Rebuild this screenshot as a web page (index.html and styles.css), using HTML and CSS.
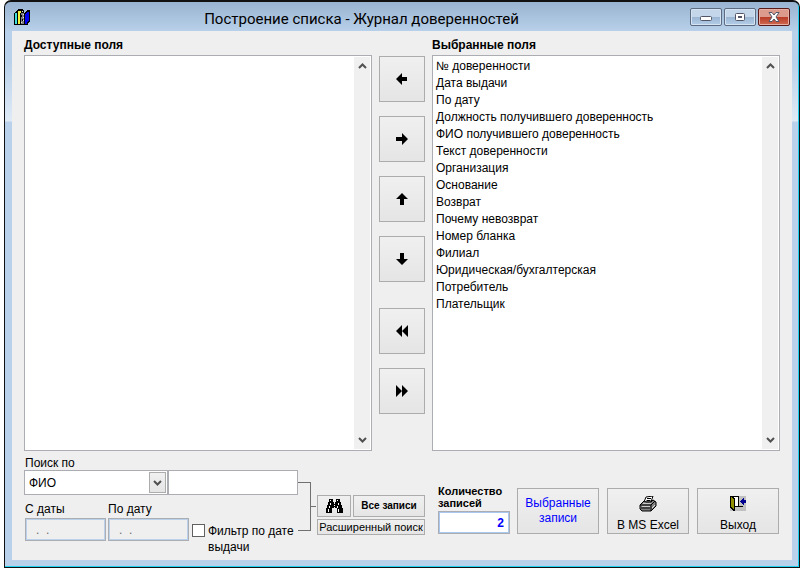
FILE: index.html
```html
<!DOCTYPE html>
<html lang="ru">
<head>
    <meta charset="UTF-8">
    <meta name="viewport" content="width=device-width, initial-scale=1.0">
    <title>Построение списка - Журнал доверенностей</title>
    <link rel="stylesheet" href="styles.css">
</head>
<body>
    <div class="window">
        <!-- Заголовок окна -->
        <header class="titlebar">
            <svg class="app-icon" width="17" height="17" viewBox="0 0 17 17" shape-rendering="crispEdges">
                <path d="M0 5h1V4h1V3h1V2h1V1h1h4v1h1v3h1V4h1V3h1V2h3v12h-1v1h-1v2H0z" fill="#000"/>
                <path d="M1 5h2v11H1z" fill="#40e0e0"/>
                <path d="M4 3h3v2H6v11H4z" fill="#f0f040"/>
                <path d="M7 5h3v11H7z" fill="#808080"/>
                <path d="M8 3h1v1H8zM9 6h1v1H9zM9 9h1v1H9zM9 12h1v1H9zM7 14h1v1H7z" fill="#e0e0e0"/>
                <path d="M7 7h1v2H7zM8 11h1v2H8z" fill="#000"/>
                <path d="M11 6h1V5h1V4h2v9h-1v1h-1v2h-2z" fill="#0000f0"/>
            </svg>
            <h1 class="title">Построение списка - Журнал доверенностей</h1>
            <div class="window-buttons">
                <button class="window-button" aria-label="Свернуть">
                    <svg width="12" height="10" viewBox="0 0 12 10"><rect x=".5" y="4.500" width="11" height="4" rx="1" fill="#fff" stroke="#535666"/></svg>
                </button>
                <button class="window-button" aria-label="Развернуть">
                    <svg width="12" height="10" viewBox="0 0 12 10"><rect x="1.500" y="1.500" width="9" height="7" rx="1" fill="#fff" stroke="#535666"/><rect x="4.500" y="4.500" width="3" height="1" fill="#8cb0d8" stroke="#535666"/></svg>
                </button>
                <button class="window-button window-close" aria-label="Закрыть">
                    <svg width="12" height="10" viewBox="0 0 12 10"><path d="M1 .5h3L6 3l2-2.500h3L8 5l3 4.500H8L6 7 4 9.500H1L4 5z" fill="#fff" stroke="#535666"/></svg>
                </button>
            </div>
        </header>

        <main class="content">
            <!-- Списки полей -->
            <section class="fields">
                <div class="field-list">
                    <label class="list-label" for="available">Доступные поля</label>
                    <div class="listbox">
                        <select class="list" id="available" size="20"></select>
                        <div class="scrollbar">
                            <svg width="9" height="6" viewBox="0 0 9 6"><path d="M1 5l3.500-3.500L8 5" fill="none" stroke="#505050" stroke-width="2"/></svg>
                            <svg width="9" height="6" viewBox="0 0 9 6"><path d="M1 1l3.500 3.500L8 1" fill="none" stroke="#505050" stroke-width="2"/></svg>
                        </div>
                    </div>
                </div>

                <div class="move-buttons">
                    <button class="button move" aria-label="Убрать поле">
                        <svg width="12" height="12" viewBox="0 0 12 12"><path d="M0 6l6-6v4h5v4H6v4z"/></svg>
                    </button>
                    <button class="button move" aria-label="Добавить поле">
                        <svg width="12" height="12" viewBox="0 0 12 12"><path d="M12 6L6 0v4H0v4h6v4z"/></svg>
                    </button>
                    <button class="button move" aria-label="Вверх">
                        <svg width="12" height="12" viewBox="0 0 12 12"><path d="M6 0l6 6H8v6H4V6H0z"/></svg>
                    </button>
                    <button class="button move" aria-label="Вниз">
                        <svg width="12" height="12" viewBox="0 0 12 12"><path d="M6 12l6-6H8V0H4v6H0z"/></svg>
                    </button>
                    <button class="button move move-all" aria-label="Убрать все">
                        <svg width="12" height="12" viewBox="0 0 12 12"><path d="M0 6l6-6v12zM6 6l6-6v12z"/></svg>
                    </button>
                    <button class="button move" aria-label="Добавить все">
                        <svg width="12" height="12" viewBox="0 0 12 12"><path d="M6 6L0 0v12zM12 6L6 0v12z"/></svg>
                    </button>
                </div>

                <div class="field-list">
                    <label class="list-label" for="selected">Выбранные поля</label>
                    <div class="listbox">
                        <select class="list" id="selected" size="20">
                            <option>№ доверенности</option>
                            <option>Дата выдачи</option>
                            <option>По дату</option>
                            <option>Должность получившего доверенность</option>
                            <option>ФИО получившего доверенность</option>
                            <option>Текст доверенности</option>
                            <option>Организация</option>
                            <option>Основание</option>
                            <option>Возврат</option>
                            <option>Почему невозврат</option>
                            <option>Номер бланка</option>
                            <option>Филиал</option>
                            <option>Юридическая/бухгалтерская</option>
                            <option>Потребитель</option>
                            <option>Плательщик</option>
                        </select>
                        <div class="scrollbar">
                            <svg width="9" height="6" viewBox="0 0 9 6"><path d="M1 5l3.500-3.500L8 5" fill="none" stroke="#505050" stroke-width="2"/></svg>
                            <svg width="9" height="6" viewBox="0 0 9 6"><path d="M1 1l3.500 3.500L8 1" fill="none" stroke="#505050" stroke-width="2"/></svg>
                        </div>
                    </div>
                </div>
            </section>

            <!-- Поиск и действия -->
            <section class="bottom">
                <div class="search">
                    <label class="search-label" for="search-by">Поиск по</label>
                    <div class="search-row">
                        <div class="combo">
                            <select class="combo-select" id="search-by">
                                <option>ФИО</option>
                            </select>
                            <span class="combo-arrow">
                                <svg width="9" height="6" viewBox="0 0 9 6"><path d="M1 1l3.500 3.500L8 1" fill="none" stroke="#505050" stroke-width="2"/></svg>
                            </span>
                        </div>
                        <input class="search-input" type="text" aria-label="Строка поиска">
                    </div>
                    <div class="date-row">
                        <div class="date">
                            <label for="date-from">С даты</label>
                            <input class="date-input" id="date-from" type="text" value=".  ." disabled>
                        </div>
                        <div class="date">
                            <label for="date-to">По дату</label>
                            <input class="date-input" id="date-to" type="text" value=".  ." disabled>
                        </div>
                        <div class="filter">
                            <input class="checkbox" id="date-filter" type="checkbox">
                            <label for="date-filter">Фильтр по дате<br>выдачи</label>
                        </div>
                    </div>
                </div>

                <div class="bracket"></div>

                <div class="search-buttons">
                    <button class="button find" aria-label="Найти">
                        <svg width="17" height="15" viewBox="0 0 17 15" shape-rendering="crispEdges">
                            <path d="M3 0h4v3h1v2h1V3h1V0h4v3h1v3h1v3h1v5h-6V9H9V8H8v1H6v5H0V9h1V6h1V3h1z"/>
                            <path d="M4 1h1v1H4zM11 1h1v1h-1zM4 4h1v2H4zM12 4h1v2h-1zM3 7h1v2H3zM8 6h1v1H8zM11 7h1v2h-1zM2 10h1v3H2zM12 10h1v3h-1z" fill="#fff"/>
                        </svg>
                    </button>
                    <button class="button all-records">Все записи</button>
                    <button class="button advanced">Расширенный поиск</button>
                </div>

                <div class="count">
                    <label class="count-label" for="count">Количество записей</label>
                    <input class="count-input" id="count" type="text" value="2">
                </div>

                <div class="actions">
                    <button class="button action action-selected">Выбранные записи</button>
                    <button class="button action">
                        <svg width="18" height="16" viewBox="0 0 18 16">
                            <path d="M5 6L7 1l7-1-2 6z" fill="#fff" stroke="#000"/>
                            <path d="M8 2.500h4M7.500 4.500h4" stroke="#000"/>
                            <path d="M1 9l4-4 2 1h5l2-2 3 2v4l-5 5H3l-2-2z" fill="#808080" stroke="#000"/>
                            <path d="M1 9h11l4-4M12 9v6M2 12h9" fill="none" stroke="#000"/>
                            <path d="M3 10.500h8M4 7.500h8" stroke="#ccc"/>
                            <path d="M13 12l3-3" stroke="#ddd"/>
                        </svg>
                        В MS Excel
                    </button>
                    <button class="button action">
                        <svg width="16" height="16" viewBox="0 0 16 16" shape-rendering="crispEdges">
                            <path d="M0 0h16v15H0z" fill="#c0c0c0"/>
                            <path d="M1 0h8v10h4v1H1z" fill="#000"/>
                            <path d="M3 1h5v9H3z" fill="#fff"/>
                            <path d="M0 0h2l3 3v12H3l-3-3z" fill="#000"/>
                            <path d="M1 1l3 3v10l-3-3z" fill="#909000"/>
                            <path d="M10 5h1V4h1V3h1V2h1v2h2v3h-2v2h-1V8h-1V7h-1V6h-1z" fill="#000090"/>
                        </svg>
                        Выход
                    </button>
                </div>
            </section>
        </main>
    </div>
</body>
</html>
```

FILE: styles.css
```css
* {
    box-sizing: border-box;
}
body {
    margin: 0;
    padding: 0 3px 2px 4px;
    min-height: 100vh;
    display: flex;
    background-color: #fff;
    font-family: "Liberation Sans", Arial, sans-serif;
    font-size: 12px;
    line-height: 16px;
    color: #000;
}
button, input, select {
    font: inherit;
    color: inherit;
    margin: 0;
    border-radius: 0;
}
.window {
    flex: 1;
    display: flex;
    flex-direction: column;
    padding: 0 7px 7px;
    border: 1px solid #111;
    border-top-width: 2px;
    border-radius: 7px 7px 0 0;
    background: linear-gradient(#99b4d1, #b9d1ea 30px, #b9d1ea 60px, #dfeaf6 119px, #b9d1ea 120px);
    box-shadow: inset -1px -1px #1fd0f0;
}

/* Заголовок */
.titlebar {
    display: flex;
    align-items: center;
    height: 29px;
    padding: 0 2px;
}
.app-icon {
    flex: none;
}
.title {
    flex: 1;
    margin: 0;
    padding: 4px 0 0 2px;
    font-family: Roboto, "Noto Sans", sans-serif;
    font-size: 15px;
    font-weight: normal;
    line-height: 24px;
    text-align: center;
}
.window-buttons {
    display: flex;
    gap: 2px;
}
.window-button {
    display: flex;
    align-items: center;
    justify-content: center;
    width: 32px;
    height: 18px;
    padding: 0;
    border: 1px solid #5d6c82;
    border-radius: 2px;
    background: linear-gradient(#c4d6ea 50%, #9ab5d3 50%, #b4cee8);
    box-shadow: inset 0 0 0 1px #d5e4f3;
}
.window-close {
    border-color: #5a1a1a;
    background: linear-gradient(#dc9a8c 50%, #b83a26 50%, #cf6a50);
    box-shadow: inset 0 0 0 1px #e6b0a4;
}

.content {
    flex: 1;
    display: flex;
    flex-direction: column;
    padding: 6px 12px 5px;
    background-color: #efefef;
}
.button {
    padding: 0;
    border: 1px solid #acacac;
    background: linear-gradient(#f0f0f0, #e5e5e5);
}

/* Списки */
.fields {
    flex: 1;
    display: grid;
    grid-template-columns: 1fr 46px 1fr;
    gap: 7px;
}
.field-list {
    display: flex;
    flex-direction: column;
}
.list-label {
    height: 18px;
    font-weight: bold;
}
.listbox {
    flex: 1;
    display: flex;
    padding: 1px;
    border: 1px solid #abadb3;
    background-color: #fff;
}
.list {
    flex: 1;
    height: 100%;
    padding: 2px 0 0;
    border: none;
    outline: none;
    overflow: hidden;
    background-color: #fff;
}
.list option {
    min-height: 17px;
    padding: 0 2px;
    line-height: 17px;
}
.scrollbar {
    display: flex;
    flex-direction: column;
    align-items: center;
    justify-content: space-between;
    width: 16px;
    padding: 6px 0;
    background-color: #f0f0f0;
}
.move-buttons {
    display: flex;
    flex-direction: column;
    gap: 14px;
    padding-top: 19px;
}
.move {
    height: 46px;
}
.move svg {
    display: block;
    margin: 0 auto;
}
.move-all {
    margin-top: 12px;
}

/* Нижняя панель */
.bottom {
    display: flex;
    align-items: flex-start;
}
.search {
    padding-top: 4px;
}
.search-label {
    display: block;
    height: 15px;
    padding-left: 1px;
}
.search-row {
    display: flex;
}
.combo {
    position: relative;
    width: 144px;
    height: 25px;
}
.combo-select {
    appearance: none;
    width: 100%;
    height: 100%;
    padding: 0 20px 0 4px;
    border: 1px solid #abadb3;
    background-color: #fff;
}
.combo-arrow {
    position: absolute;
    top: 2px;
    right: 2px;
    bottom: 2px;
    width: 17px;
    display: flex;
    align-items: center;
    justify-content: center;
    border: 1px solid #acacac;
    background: linear-gradient(#f0f0f0, #e5e5e5);
    pointer-events: none;
}
.search-input {
    width: 130px;
    height: 25px;
    padding: 0 4px;
    border: 1px solid #abadb3;
}
.date-row {
    display: flex;
    gap: 2px;
    padding: 6px 0 0 1px;
}
.date {
    display: flex;
    flex-direction: column;
    width: 81px;
}
.date-input {
    width: 100%;
    height: 23px;
    margin-top: 1px;
    padding: 0 10px;
    border: 1px solid #abadb3;
    background-color: #efefef;
    box-shadow: inset 0 0 0 1px #b9d1ea;
    color: #6d6d6d;
    white-space: pre;
}
.filter {
    display: flex;
    gap: 3px;
    padding: 22px 0 0 1px;
}
.checkbox {
    appearance: none;
    width: 13px;
    height: 13px;
    margin-top: 1px;
    border: 1px solid #606060;
    background-color: #fff;
}
.checkbox:checked {
    box-shadow: inset 0 0 0 2px #fff;
    background-color: #333;
}
/* Скобка от полей поиска к кнопкам */
.bracket {
    position: relative;
    width: 13px;
    height: 49px;
    margin: 31px 6px 0 0;
    border: 1px solid #707070;
    border-left: none;
}
.bracket::after {
    content: "";
    position: absolute;
    top: 23px;
    left: 13px;
    width: 5px;
    height: 1px;
    background-color: #707070;
}
.search-buttons {
    display: grid;
    grid-template-columns: 34px 72px;
    gap: 2px;
    padding-top: 44px;
}
.find, .all-records {
    height: 22px;
}
.find svg {
    display: block;
    margin: 0 auto;
}
.all-records {
    font-size: 10px;
    font-weight: bold;
}
.advanced {
    grid-column: span 2;
    height: 16px;
    font-size: 11px;
    line-height: 14px;
    white-space: nowrap;
}
.count {
    width: 72px;
    margin-left: auto;
    padding-top: 34px;
}
.count-label {
    display: block;
    font-size: 11px;
    font-weight: bold;
    line-height: 12px;
}
.count-input {
    width: 100%;
    height: 23px;
    margin-top: 2px;
    padding: 0 5px;
    border: 1px solid #abadb3;
    box-shadow: inset 0 0 0 1px #a8c8f0;
    background-color: #fff;
    color: #0000ff;
    font-weight: bold;
    text-align: right;
}
.actions {
    display: flex;
    gap: 8px;
    padding: 37px 1px 0 7px;
}
.action {
    display: flex;
    flex-direction: column;
    align-items: center;
    justify-content: flex-end;
    gap: 5px;
    width: 82px;
    height: 46px;
}
.action-selected {
    display: block;
    color: #0000ff;
    line-height: 15px;
}
```
